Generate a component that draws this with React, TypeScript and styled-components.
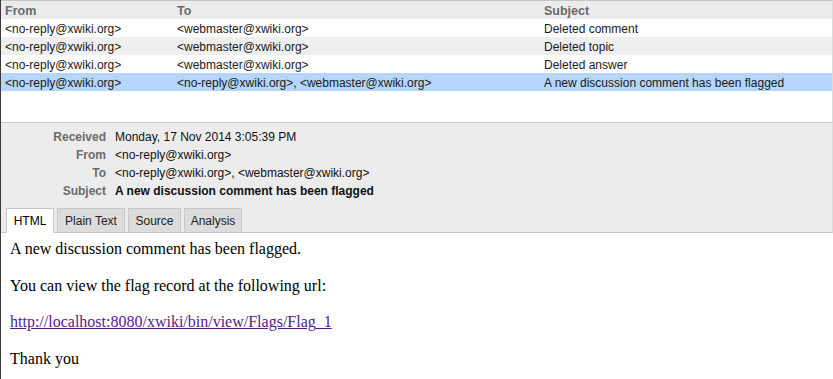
import React from "react";
import styled, { createGlobalStyle } from "styled-components";

const Global = createGlobalStyle`
  html, body { margin: 0; padding: 0; background: #fff; overflow: hidden; }
  #root { width: 833px; height: 379px; }
`;

const Frame = styled.div`
  width: 833px;
  height: 379px;
  display: flex;
  flex-direction: column;
  box-sizing: border-box;
  border-left: 1px solid #3a3a3a;
  font-family: "Liberation Sans", Arial, sans-serif;
  font-size: 12px;
  color: #111;
  overflow: hidden;
`;

const ListPane = styled.div`
  flex: 0 0 122px;
  border-top: 1px solid #c4c4c4;
  box-sizing: border-box;
  border-right: 1px solid #dcdcdc;
`;

const Row = styled.div<{ $bg: string; $head?: boolean }>`
  display: grid;
  grid-template-columns: 172px 367px 1fr;
  height: 18px;
  padding-top: 1px;
  box-sizing: border-box;
  align-items: center;
  background: ${(p) => p.$bg};
  font-weight: ${(p) => (p.$head ? "bold" : "normal")};
  color: ${(p) => (p.$head ? "#6a6a6a" : "#1a1a1a")};
  font-size: ${(p) => (p.$head ? "12.5px" : "12px")};
`;

const Cell = styled.div`
  padding-left: 4px;
  white-space: nowrap;
  overflow: hidden;
`;

const Details = styled.div`
  flex: 0 0 auto;
  background: #ececec;
  border-top: 1px solid #c8c8c8;
  border-bottom: 1px solid #c8c8c8;
  border-right: 1px solid #dcdcdc;
  padding-top: 5px;
  display: flex;
  flex-direction: column;
`;

const Field = styled.div`
  display: grid;
  grid-template-columns: 105px 1fr;
  column-gap: 9px;
  height: 18px;
  align-items: center;
`;

const Label = styled.div`
  text-align: right;
  font-weight: bold;
  color: #6b6b6b;
`;

const Value = styled.div<{ $bold?: boolean }>`
  font-weight: ${(p) => (p.$bold ? "bold" : "normal")};
  color: #111;
`;

const Tabs = styled.div`
  display: flex;
  gap: 3px;
  padding-left: 5px;
  margin-top: 8px;
  margin-bottom: -1px;
`;

const Tab = styled.div<{ $active?: boolean; $w: number }>`
  width: ${(p) => p.$w}px;
  height: 25px;
  box-sizing: border-box;
  display: flex;
  align-items: center;
  justify-content: center;
  border: 1px solid #c8c8c8;
  border-bottom: ${(p) => (p.$active ? "1px solid #fff" : "1px solid #c8c8c8")};
  background: ${(p) => (p.$active ? "#fff" : "#dcdcdc")};
  color: ${(p) => (p.$active ? "#000" : "#222")};
  font-size: 12px;
  padding-top: 1px;
`;

const Body = styled.div`
  flex: 1;
  padding: 0 9px;
  font-family: "Liberation Serif", "Times New Roman", serif;
  font-size: 16px;
  color: #000;
  p { margin: 18.5px 0; line-height: 18px; }
  p:first-child { margin-top: 7px; }
  a { color: #551a8b; }
`;

const messages = [
  { from: "<no-reply@xwiki.org>", to: "<webmaster@xwiki.org>", subject: "Deleted comment" },
  { from: "<no-reply@xwiki.org>", to: "<webmaster@xwiki.org>", subject: "Deleted topic" },
  { from: "<no-reply@xwiki.org>", to: "<webmaster@xwiki.org>", subject: "Deleted answer" },
  {
    from: "<no-reply@xwiki.org>",
    to: "<no-reply@xwiki.org>, <webmaster@xwiki.org>",
    subject: "A new discussion comment has been flagged",
  },
];

const tabs = [
  { label: "HTML", w: 48, active: true },
  { label: "Plain Text", w: 68 },
  { label: "Source", w: 53 },
  { label: "Analysis", w: 58 },
];

export default function App() {
  return (
    <>
      <Global />
      <Frame>
        <ListPane>
          <Row $bg="#ececec" $head>
            <Cell>From</Cell>
            <Cell>To</Cell>
            <Cell>Subject</Cell>
          </Row>
          {messages.map((m, i) => (
            <Row key={i} $bg={i === 3 ? "#b5d5fb" : i % 2 === 1 ? "#efefef" : "#ffffff"}>
              <Cell>{m.from}</Cell>
              <Cell>{m.to}</Cell>
              <Cell>{m.subject}</Cell>
            </Row>
          ))}
        </ListPane>
        <Details>
          <Field>
            <Label>Received</Label>
            <Value>Monday, 17 Nov 2014 3:05:39 PM</Value>
          </Field>
          <Field>
            <Label>From</Label>
            <Value>&lt;no-reply@xwiki.org&gt;</Value>
          </Field>
          <Field>
            <Label>To</Label>
            <Value>&lt;no-reply@xwiki.org&gt;, &lt;webmaster@xwiki.org&gt;</Value>
          </Field>
          <Field>
            <Label>Subject</Label>
            <Value $bold>A new discussion comment has been flagged</Value>
          </Field>
          <Tabs>
            {tabs.map((t) => (
              <Tab key={t.label} $active={t.active} $w={t.w}>
                {t.label}
              </Tab>
            ))}
          </Tabs>
        </Details>
        <Body>
          <p>A new discussion comment has been flagged.</p>
          <p>You can view the flag record at the following url:</p>
          <p>
            <a href="#flag">http://localhost:8080/xwiki/bin/view/Flags/Flag_1</a>
          </p>
          <p>Thank you</p>
        </Body>
      </Frame>
    </>
  );
}
